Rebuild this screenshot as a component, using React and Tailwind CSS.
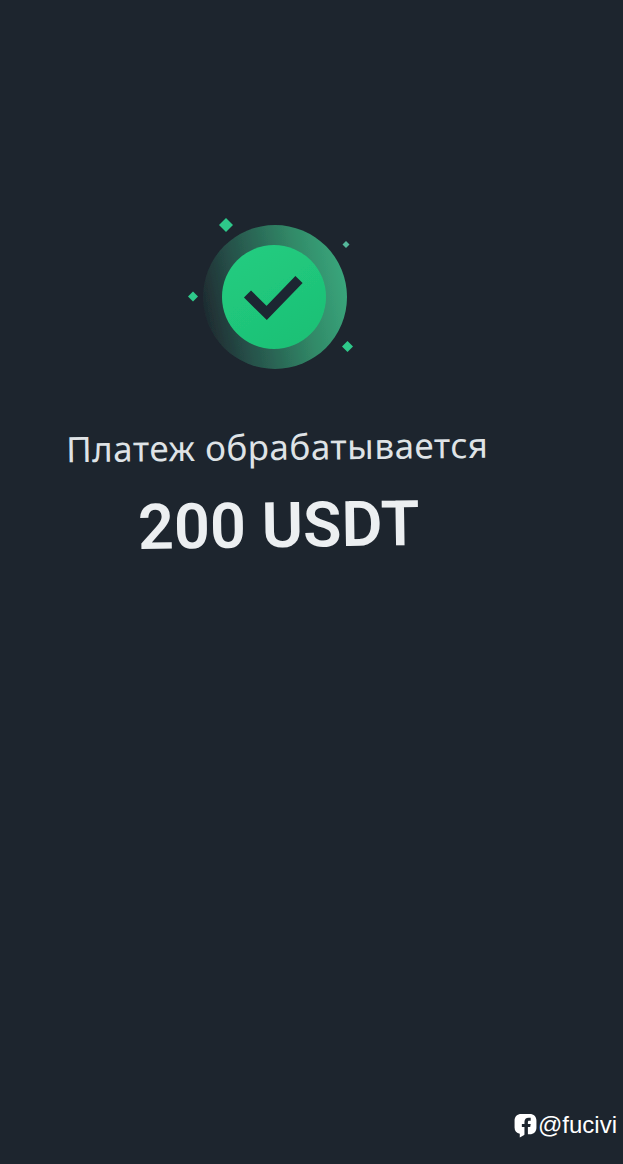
import React from 'react';

function SuccessIcon() {
    return (
        <svg width="180" height="170" viewBox="0 0 180 170" className="block">
            <defs>
                <linearGradient id="ringFill" x1="0" y1="0.6" x2="1" y2="0.4">
                    <stop offset="0%" stopColor="#1e2a30" />
                    <stop offset="25%" stopColor="#265049" />
                    <stop offset="70%" stopColor="#318a68" />
                    <stop offset="100%" stopColor="#3aa67c" />
                </linearGradient>
                <linearGradient id="discFill" x1="0.2" y1="0" x2="0.8" y2="1">
                    <stop offset="0%" stopColor="#22cc80" />
                    <stop offset="100%" stopColor="#1dc075" />
                </linearGradient>
                <filter id="soft"><feGaussianBlur stdDeviation="0.6" /></filter>
            </defs>
            <g filter="url(#soft)">
                {/* x/y here are page coords minus (180, 212) */}
                <circle cx="95" cy="85" r="72" fill="url(#ringFill)" />
                <circle cx="94" cy="85" r="52" fill="url(#discFill)" />
                <path d="M67.500 82 L86.700 101 L119 67.500" fill="none" stroke="#1c2630" strokeWidth="10" />
                <path d="M46 6 L53 13 L46 20 L39 13 Z" fill="#2fc98a" />
                <path d="M13 79.500 L18 84.500 L13 89.500 L8 84.500 Z" fill="#2fc98a" />
                <path d="M166 29 L169.500 32.500 L166 36 L162.500 32.500 Z" fill="#55b79a" />
                <path d="M167.500 129 L173 134.500 L167.500 140 L162 134.500 Z" fill="#2fc98a" />
            </g>
        </svg>
    );
}

export default function App() {
    return (
        <div className="relative h-[1164px] w-[623px] overflow-hidden bg-[#1d252e] font-['Inter','Liberation_Sans',sans-serif]">
            <div className="flex flex-col items-start pt-[212px]">
                <div className="ml-[180px]">
                    <SuccessIcon />
                </div>
                <p className="mt-[45px] ml-[66px] -rotate-[0.6deg] whitespace-nowrap font-['Noto_Sans','Inter',sans-serif] text-[35px] leading-[40px] tracking-[0.5px] text-[#dfe3e6]">
                    Платеж обрабатывается
                </p>
                <p className="mt-[23px] ml-[138px] -rotate-[0.8deg] whitespace-nowrap font-['Roboto','Liberation_Sans',sans-serif] text-[63px] font-semibold leading-[72px] text-[#eceff1]">
                    200 USDT
                </p>
            </div>

            {/* watermark */}
            <div className="absolute bottom-[24px] right-[6px] flex items-center gap-[1px] font-['Liberation_Sans',sans-serif] text-[24px] leading-[30px] text-white">
                <svg width="23" height="25" viewBox="0 0 22 24">
                    <path d="M7 1 H15 C19 1 21.500 3.500 21.500 7.500 V14 C21.500 18 19 20.500 15 20.500 H11 L5.500 23.500 V20 C2.500 19.500 0.500 17.500 0.500 14 V7.500 C0.500 3.500 3 1 7 1 Z" fill="#fff" />
                    <path d="M10 21 V13.500 H7.500 V10.500 H10 V8.500 C10 6 11.500 4.500 14 4.500 H16 V7.500 H14.500 C13.500 7.500 13.300 8 13.300 9 V10.500 H16 L15.500 13.500 H13.300 V21 Z" fill="#1d252e" />
                </svg>
                <span>@fucivi</span>
            </div>
        </div>
    );
}
